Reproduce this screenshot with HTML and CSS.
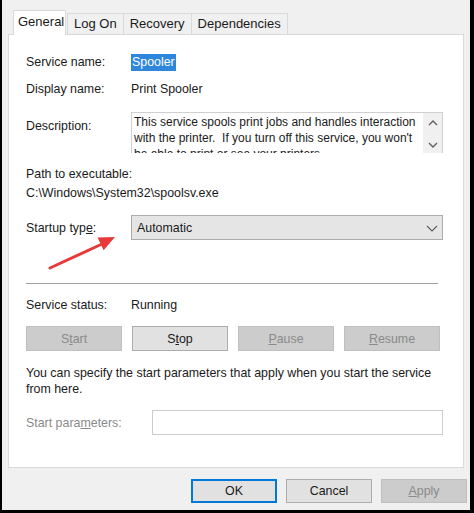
FILE: index.html
```html
<!DOCTYPE html>
<html lang="en">
  <head>
    <meta charset="UTF-8" />
    <title>Print Spooler Properties</title>
    <link rel="stylesheet" href="styles.css">
  </head>
  <body>
    <div class="window">
      <!-- 탭 -->
      <div class="tabs">
        <div class="tab active">General</div>
        <div class="tab">Log On</div>
        <div class="tab">Recovery</div>
        <div class="tab">Dependencies</div>
      </div>

      <div class="panel">
        <div class="row row-name">
          <span class="label">Service name:</span>
          <span class="value"><span class="selected">Spooler</span></span>
        </div>

        <div class="row row-display">
          <span class="label">Display name:</span>
          <span class="value">Print Spooler</span>
        </div>

        <div class="row row-desc">
          <span class="label desc-label">Description:</span>
          <div class="textbox">
            <div class="textbox-text">
              This service spools print jobs and handles interaction
              with the printer.&nbsp; If you turn off this service, you won't
              be able to print or see your printers.
            </div>
            <div class="scroll">
              <svg width="12" height="8" viewBox="0 0 12 8"><path d="M2 6 L6 2 L10 6" fill="none" stroke="#606060" stroke-width="1.4"/></svg>
              <svg width="12" height="8" viewBox="0 0 12 8"><path d="M2 2 L6 6 L10 2" fill="none" stroke="#606060" stroke-width="1.4"/></svg>
            </div>
          </div>
        </div>

        <div class="path-label">Path to executable:</div>
        <div class="path-value">C:\Windows\System32\spoolsv.exe</div>

        <div class="row row-startup">
          <span class="label">Startup typ<u>e</u>:</span>
          <div class="combo">
            <span>Automatic</span>
            <svg width="12" height="8" viewBox="0 0 12 8"><path d="M1 2 L6 7 L11 2" fill="none" stroke="#606060" stroke-width="1.2"/></svg>
          </div>
          <!-- 빨간 화살표 -->
          <svg class="arrow" width="76" height="42" viewBox="0 0 76 42">
            <line x1="4" y1="36" x2="56" y2="12" stroke="#e5393a" stroke-width="3" stroke-linecap="round"/>
            <polygon points="69,5 57.6,18.2 51.6,5.6" fill="#e5393a"/>
          </svg>
        </div>

        <div class="separator"></div>

        <div class="row row-status">
          <span class="label">Service status:</span>
          <span class="value">Running</span>
        </div>

        <div class="status-buttons">
          <button class="btn disabled">S<u>t</u>art</button>
          <button class="btn">S<u>t</u>op</button>
          <button class="btn disabled"><u>P</u>ause</button>
          <button class="btn disabled"><u>R</u>esume</button>
        </div>

        <p class="hint">
          You can specify the start parameters that apply when you start the service
          from here.
        </p>

        <div class="row row-params">
          <span class="label muted">Start para<u>m</u>eters:</span>
          <div class="param-input"></div>
        </div>
      </div>

      <div class="footer">
        <button class="btn footer-btn ok">OK</button>
        <button class="btn footer-btn">Cancel</button>
        <button class="btn footer-btn disabled"><u>A</u>pply</button>
      </div>
    </div>
  </body>
</html>
```

FILE: styles.css
```css
body {
  margin: 0;
  padding: 0;
  background: #000;
  font-family: "Liberation Sans", Arial, sans-serif;
  font-size: 12.4px;
  color: #1a1a1a;
}

.window {
  width: 468px;
  height: 510px;
  margin-left: 2px;
  background: #f0f0f0;
  box-sizing: border-box;
  padding: 10px 0 0 6px;
  display: flex;
  flex-direction: column;
}

/* 탭 */
.tabs {
  display: flex;
  align-items: flex-end;
  padding-left: 6px;
  height: 24px;
  position: relative;
  z-index: 1;
  font-size: 13px;
}

.tab {
  height: 21px;
  box-sizing: border-box;
  border: 1px solid #d9d9d9;
  border-bottom: none;
  background: #f0f0f0;
  line-height: 20px;
  padding: 0 6px;
  margin-left: -1px;
}

.tab:nth-child(2) {
  margin-left: 1px;
}

.tab.active {
  height: 25px;
  margin-bottom: -1px;
  background: #fff;
  line-height: 22px;
  padding: 0 6px 0 4px;
  width: 53px;
}

.panel {
  width: 456px;
  height: 434px;
  box-sizing: border-box;
  background: #fff;
  border: 1px solid #d9d9d9;
  padding: 18px 20px 0 17px;
}

.row {
  display: flex;
  align-items: center;
}

.label {
  width: 105px;
  flex-shrink: 0;
}

.row-name,
.row-display {
  height: 20px;
}

.row-name {
  margin-top: -1px;
}

.row-display {
  margin-top: 7px;
}

.selected {
  background: #2f86dd;
  color: #fff;
  padding: 1px 1px 2px;
}

.row-desc {
  margin-top: 13px;
  align-items: flex-start;
}

.desc-label {
  padding-top: 6px;
  line-height: 16px;
}

.textbox {
  width: 312px;
  height: 41px;
  box-sizing: border-box;
  border: 1px solid #d0d0d0;
  border-bottom: none;
  display: flex;
  overflow: hidden;
}

.textbox-text {
  flex: 1;
  padding: 1px 1px 0 2px;
  line-height: 16px;
  font-size: 12px;
  overflow: hidden;
}

.scroll {
  width: 19px;
  background: #f0f0f0;
  display: flex;
  flex-direction: column;
  align-items: center;
  justify-content: space-between;
  padding: 6px 0 4px;
  box-sizing: border-box;
}

.path-label {
  margin-top: 13px;
  line-height: 16px;
}

.path-value {
  margin-top: 3px;
  line-height: 16px;
}

.row-startup {
  margin-top: 14px;
  height: 25px;
  position: relative;
}

.combo {
  width: 312px;
  height: 25px;
  box-sizing: border-box;
  border: 1px solid #acacac;
  background: #e5e5e5;
  display: flex;
  align-items: center;
  justify-content: space-between;
  padding: 0 4px 0 5px;
}

.arrow {
  position: absolute;
  left: 20px;
  top: 17px;
}

.separator {
  margin-top: 43px;
  width: 412px;
  height: 1px;
  background: #a0a0a0;
}

.row-status {
  margin-top: 13px;
  height: 16px;
}

.status-buttons {
  margin-top: 13px;
  display: flex;
  gap: 10px;
}

.btn {
  font-family: inherit;
  font-size: 12.4px;
  color: #1a1a1a;
  height: 25px;
  width: 96px;
  border: 1px solid #adadad;
  background: #e1e1e1;
  padding: 0;
}

.btn.disabled {
  background: #cccccc;
  border-color: #bfbfbf;
  color: #8a8a8a;
}

.hint {
  margin: 14px 0 0;
  line-height: 16px;
}

.row-params {
  margin-top: 13px;
  height: 25px;
}

.label.muted {
  width: 126px;
  color: #8a8a8a;
}

.param-input {
  width: 291px;
  height: 25px;
  box-sizing: border-box;
  border: 1px solid #cccccc;
  background: #fff;
}

.footer {
  display: flex;
  justify-content: flex-end;
  gap: 9px;
  padding: 11px 3px 0 0;
}

.footer-btn {
  width: 86px;
  height: 24px;
}

.footer-btn.ok {
  border: 2px solid #0078d7;
}
```
